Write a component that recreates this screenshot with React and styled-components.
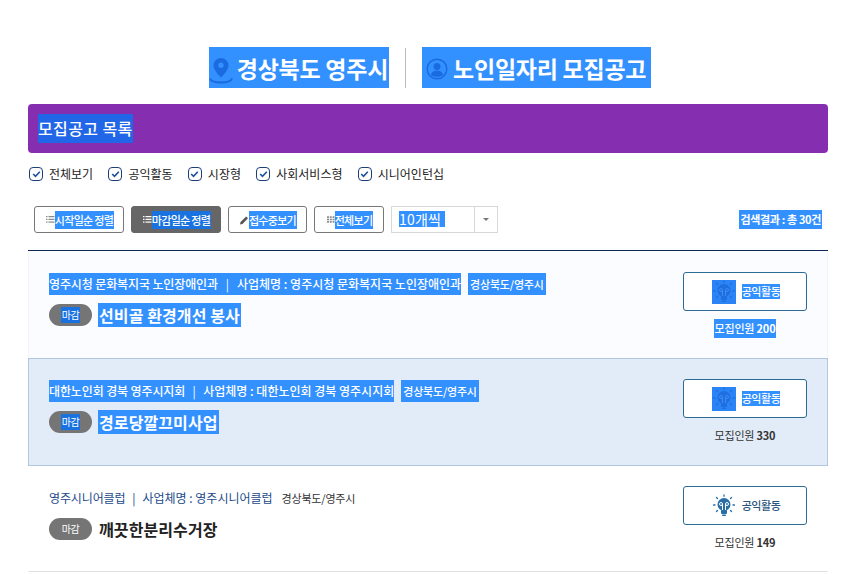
import React from "react";
import styled, { createGlobalStyle } from "styled-components";

const HL = "#3390ff";

const GlobalStyle = createGlobalStyle`
  html, body {
    margin: 0;
    padding: 0;
    background: #fff;
    font-family: "Noto Sans CJK KR", "Noto Sans", sans-serif;
    color: #222;
  }
`;

const Page = styled.div`
  box-sizing: border-box;
  width: 848px;
  height: 574px;
  overflow: hidden;
  padding: 47px 20px 0 28px;
`;

const Head = styled.div`
  display: flex;
  justify-content: center;
  align-items: center;
  height: 41px;
  padding-left: 4px;
`;

const HeadTitle = styled.h2`
  display: flex;
  align-items: center;
  height: 41px;
  margin: 0;
  padding: 0 ${(p) => p.$right}px 0 ${(p) => p.$left}px;
  background: ${HL};
  color: #fff;
  font-size: 23px;
  font-weight: 700;
  letter-spacing: -0.25px;
  svg {
    margin: 3px ${(p) => p.$gap}px 0 0;
    flex: none;
  }
`;

const HeadLine = styled.span`
  width: 1px;
  height: 40px;
  background: #bbb;
  margin: 0 16px;
`;

const Panel = styled.div`
  display: flex;
  align-items: center;
  height: 49px;
  margin-top: 16px;
  padding-left: 10px;
  border-radius: 4px;
  background: #862eb0;
  h3 {
    margin: 0;
    background: #2266e8;
    color: #fff;
    font-size: 16px;
    font-weight: 500;
    line-height: 29px;
    letter-spacing: 0.4px;
  }
`;

const Checks = styled.div`
  display: flex;
  gap: 15.25px;
  margin-top: 13px;
  padding-left: 1px;
  height: 16px;
`;

const Check = styled.label`
  display: flex;
  align-items: center;
  gap: 6px;
  font-size: 12px;
  color: #222;
  line-height: 16px;
`;

const Box = styled.span`
  display: flex;
  align-items: center;
  justify-content: center;
  width: 12px;
  height: 12px;
  border: 1.5px solid #1c3f78;
  border-radius: 4px;
`;

const Toolbar = styled.div`
  display: flex;
  align-items: center;
  height: 27px;
  margin-top: 24px;
  padding-left: 6px;
  gap: 7px;
`;

const SortButton = styled.button`
  display: flex;
  align-items: center;
  justify-content: center;
  width: ${(p) => p.$w}px;
  height: 27px;
  padding: 0 0 0 2px;
  border: 1px solid ${(p) => (p.$on ? "#666" : "#777")};
  border-radius: 3px;
  background: ${(p) => (p.$on ? "#666" : "#fff")};
  color: ${(p) => (p.$on ? "#fff" : "#444")};
  font: inherit;
  svg {
    flex: none;
  }
  span {
    padding-right: 1px;
    background: ${(p) => (p.$on ? "#1a72e0" : HL)};
    color: #fff;
    font-size: 11px;
    font-weight: 500;
    line-height: 18px;
    letter-spacing: -0.7px;
    white-space: nowrap;
  }
`;

const Select = styled.div`
  display: flex;
  width: 105px;
  height: 25px;
  border: 1px solid #d8d8d8;
`;

const SelectValue = styled.div`
  flex: 1;
  padding: 4px 0 0 7px;
  span {
    display: block;
    width: fit-content;
    height: 16px;
    padding-right: 4px;
    background: ${HL};
    color: #fff;
    font-size: 14px;
    line-height: 16px;
    letter-spacing: 0.2px;
  }
`;

const SelectArrow = styled.div`
  display: flex;
  align-items: center;
  justify-content: center;
  width: 22px;
  border-left: 1px solid #d8d8d8;
  &::after {
    content: "";
    border-top: 3px solid #777;
    border-left: 3px solid transparent;
    border-right: 3px solid transparent;
  }
`;

const Result = styled.span`
  margin-left: auto;
  margin-right: 6px;
  padding: 0 1px;
  background: ${HL};
  color: #fff;
  font-size: 11px;
  font-weight: 700;
  line-height: 19px;
  letter-spacing: -0.35px;
`;

const List = styled.div`
  margin-top: 17px;
  border-top: 1px solid #0f2a55;
`;

const Item = styled.div`
  display: flex;
  justify-content: space-between;
  box-sizing: border-box;
  height: ${(p) => p.$h}px;
  padding: ${(p) => p.$top}px 20px 0;
  background: ${(p) => (p.$on ? "#e2ecf8" : p.$soft ? "#fbfcff" : "#fff")};
  border: 1px solid transparent;
  border-width: ${(p) => (p.$on ? "1px" : "0 1px 1px")};
  border-color: ${(p) => (p.$on ? "#b3c6de" : p.$soft ? "#f3f5f9" : "#fff")};
  border-bottom-color: ${(p) => (p.$on ? "#b3c6de" : p.$soft ? "#fbfcff" : "#e0e0e0")};
`;

const Info = styled.div`
  padding-top: 1px;
`;

const Meta = styled.div`
  display: flex;
  align-items: center;
  height: 22px;
  font-size: 12px;
  font-weight: ${(p) => (p.$sel ? 500 : 400)};
`;

const Org = styled.span`
  background: ${(p) => (p.$sel ? HL : "transparent")};
  color: ${(p) => (p.$sel ? "#fff" : "#234a8a")};
  line-height: 22px;
  white-space: nowrap;
  letter-spacing: ${(p) => (p.$wide ? "0" : "-0.12px")};
`;

const Sep = styled.span`
  width: ${(p) => p.$w}px;
  background: ${(p) => (p.$sel ? HL : "transparent")};
  color: ${(p) => (p.$sel ? "#fff" : "#234a8a")};
  font-weight: 400;
  line-height: 22px;
  text-align: center;
`;

const Area = styled.span`
  margin-left: 7px;
  padding: 0 2px;
  background: ${(p) => (p.$sel ? HL : "transparent")};
  color: ${(p) => (p.$sel ? "#fff" : "#333")};
  font-size: 11px;
  line-height: 22px;
  letter-spacing: -0.2px;
`;

const TitleRow = styled.div`
  display: flex;
  align-items: center;
  height: 24px;
  margin-top: 8px;
`;

const Badge = styled.span`
  display: flex;
  align-items: center;
  justify-content: center;
  width: 43px;
  height: 22px;
  border-radius: 11px;
  background: #757575;
  em {
    padding: 0 1px;
    background: ${(p) => (p.$sel ? "#1a72e0" : "transparent")};
    color: #fff;
    font-size: 10px;
    font-style: normal;
    line-height: 16px;
    letter-spacing: -0.5px;
  }
`;

const Title = styled.strong`
  margin-left: 6px;
  padding: 0 1px;
  background: ${(p) => (p.$sel ? HL : "transparent")};
  color: ${(p) => (p.$sel ? "#fff" : "#222")};
  font-size: 16px;
  font-weight: 700;
  line-height: 24px;
  letter-spacing: 0.1px;
`;

const Side = styled.div`
  display: flex;
  flex-direction: column;
  align-items: center;
  width: 124px;
`;

const TypeBox = styled.div`
  display: flex;
  align-items: center;
  justify-content: center;
  gap: 6px;
  width: 122px;
  height: 37px;
  border: 1px solid #2d6a96;
  border-radius: 3px;
  background: #fff;
  span {
    padding: 1px 0;
    background: ${(p) => (p.$sel ? HL : "transparent")};
    color: ${(p) => (p.$sel ? "#fff" : "#2a5580")};
    font-size: 11px;
    font-weight: 500;
    line-height: 13px;
    letter-spacing: -0.45px;
  }
`;

const IconWrap = styled.div`
  display: flex;
  margin-left: 2px;
  background: ${(p) => (p.$sel ? "#2b84f5" : "transparent")};
`;

const Count = styled.div`
  margin-top: 8px;
  padding: 0 1px;
  background: ${(p) => (p.$sel ? HL : "transparent")};
  color: ${(p) => (p.$sel ? "#fff" : "#333")};
  font-size: 11px;
  font-weight: ${(p) => (p.$sel ? 500 : 400)};
  line-height: 19px;
  letter-spacing: -0.2px;
  b {
    font-weight: 700;
  }
`;

function PinIcon() {
  return (
    <svg width="24" height="30" viewBox="0 0 24 30">
      <path
        d="M12 4a7.500 7.500 0 0 0-7.500 7.500c0 5 7.500 12 7.500 12s7.500-7 7.500-12A7.500 7.500 0 0 0 12 4zm0 10a2.700 2.700 0 1 1 0-5.400 2.700 2.700 0 0 1 0 5.400z"
        fill="#1a6ae0"
        fillRule="evenodd"
      />
      <path d="M1 24.500c1 3 6 4 11 4s10-1 11-4" fill="none" stroke="#1a6ae0" strokeWidth="2" />
    </svg>
  );
}

function PersonIcon() {
  return (
    <svg width="22" height="22" viewBox="0 0 22 22">
      <circle cx="11" cy="11" r="9.800" fill="none" stroke="#1a6ae0" strokeWidth="1.500" />
      <circle cx="11" cy="8.500" r="3.500" fill="#1a6ae0" />
      <path d="M4.800 17c1-3.200 3.300-4.500 6.200-4.500s5.200 1.300 6.200 4.500c-3.300 2.400-9.100 2.400-12.400 0z" fill="#1a6ae0" />
    </svg>
  );
}

function ListIcon({ color }) {
  return (
    <svg width="9" height="7" viewBox="0 0 9 7" fill={color}>
      {[0, 2.750, 5.500].map((y) => (
        <React.Fragment key={y}>
          <rect x="0" y={y} width="1.500" height="1.200" />
          <rect x="2.500" y={y} width="6" height="1.200" />
        </React.Fragment>
      ))}
    </svg>
  );
}

function PencilIcon() {
  return (
    <svg width="9" height="10" viewBox="0 0 11 11" fill="#555">
      <path d="M0 11l.7-3L7.500 1.200l2.300 2.300L3 10.300z" />
    </svg>
  );
}

function GridIcon() {
  return (
    <svg width="8" height="7" viewBox="0 0 10 8" fill="#888">
      {[0, 3, 6].map((y) =>
        [0, 3.500, 7].map((x) => <rect key={`${x}-${y}`} x={x} y={y} width="2.500" height="2" />)
      )}
    </svg>
  );
}

function BulbIcon({ color, line }) {
  return (
    <svg width="24" height="24" viewBox="0 0 24 24">
      <circle cx="12" cy="10.500" r="6.500" fill={color} />
      <rect x="9" y="16" width="6" height="4" rx="1" fill={color} />
      <rect x="10" y="20.500" width="4" height="1.500" rx="0.700" fill={color} />
      <path
        d="M10.500 16v-6a1.500 1.500 0 0 0-3 0 1.500 1.500 0 0 0 3 0M13.500 16v-6a1.500 1.500 0 0 1 3 0 1.500 1.500 0 0 1-3 0"
        fill="none"
        stroke={line}
        strokeWidth="1"
      />
      <g stroke={color} strokeWidth="1.300" strokeLinecap="round">
        <path d="M12 0.800v1.500M4.500 3.500l1 1M19.500 3.500l-1 1M1.500 11H3M21 11h1.500M4.500 17.500l1-1M19.500 17.500l-1-1" />
      </g>
    </svg>
  );
}

const checks = ["전체보기", "공익활동", "시장형", "사회서비스형", "시니어인턴십"];

const items = [
  {
    org: "영주시청 문화복지국 노인장애인과",
    biz: "사업체명 : 영주시청 문화복지국 노인장애인과",
    title: "선비골 환경개선 봉사",
    count: "200",
    h: 107,
    top: 21,
    sep: 19,
    soft: true,
    sel: true,
    countSel: true,
  },
  {
    org: "대한노인회 경북 영주시지회",
    biz: "사업체명 : 대한노인회 경북 영주시지회",
    title: "경로당깔끄미사업",
    count: "330",
    h: 108,
    top: 20,
    sep: 18,
    on: true,
    sel: true,
  },
  {
    org: "영주시니어클럽",
    biz: "사업체명 : 영주시니어클럽",
    title: "깨끗한분리수거장",
    count: "149",
    h: 106,
    top: 20,
    sep: 17,
  },
];

export default function App() {
  return (
    <Page>
      <GlobalStyle />
      <Head>
        <HeadTitle $left={0} $right={1} $gap={4}>
          <PinIcon />
          경상북도 영주시
        </HeadTitle>
        <HeadLine />
        <HeadTitle $left={4} $right={5} $gap={5}>
          <PersonIcon />
          노인일자리 모집공고
        </HeadTitle>
      </Head>

      <Panel>
        <h3>모집공고 목록</h3>
      </Panel>

      <Checks>
        {checks.map((label) => (
          <Check key={label}>
            <Box>
              <svg width="9" height="8" viewBox="0 0 9 8">
                <path d="M1.200 4l2.300 2.300 4.300-4.600" fill="none" stroke="#1c4f9c" strokeWidth="1.600" />
              </svg>
            </Box>
            {label}
          </Check>
        ))}
      </Checks>

      <Toolbar>
        <SortButton $w={90}>
          <ListIcon color="#888" />
          <span>시작일순 정렬</span>
        </SortButton>
        <SortButton $w={90} $on>
          <ListIcon color="#fff" />
          <span>마감일순 정렬</span>
        </SortButton>
        <SortButton $w={79}>
          <PencilIcon />
          <span>접수중보기</span>
        </SortButton>
        <SortButton $w={70}>
          <GridIcon />
          <span>전체보기</span>
        </SortButton>
        <Select>
          <SelectValue>
            <span>10개씩</span>
          </SelectValue>
          <SelectArrow />
        </Select>
        <Result>검색결과 : 총 30건</Result>
      </Toolbar>

      <List>
        {items.map((item) => (
          <Item key={item.title} $h={item.h} $top={item.top} $on={item.on} $soft={item.soft}>
            <Info>
              <Meta $sel={item.sel}>
                <Org $sel={item.sel}>{item.org}</Org>
                <Sep $sel={item.sel} $w={item.sep}>|</Sep>
                <Org $sel={item.sel} $wide>{item.biz}</Org>
                <Area $sel={item.sel}>경상북도/영주시</Area>
              </Meta>
              <TitleRow>
                <Badge $sel={item.sel}>
                  <em>마감</em>
                </Badge>
                <Title $sel={item.sel}>{item.title}</Title>
              </TitleRow>
            </Info>
            <Side>
              <TypeBox $sel={item.sel}>
                <IconWrap $sel={item.sel}>
                  <BulbIcon
                    color={item.sel ? "#1f6fe0" : "#2a6ea8"}
                    line={item.sel ? "#3b8cf5" : "#fff"}
                  />
                </IconWrap>
                <span>공익활동</span>
              </TypeBox>
              <Count $sel={item.countSel}>
                모집인원 <b>{item.count}</b>
              </Count>
            </Side>
          </Item>
        ))}
      </List>
    </Page>
  );
}
